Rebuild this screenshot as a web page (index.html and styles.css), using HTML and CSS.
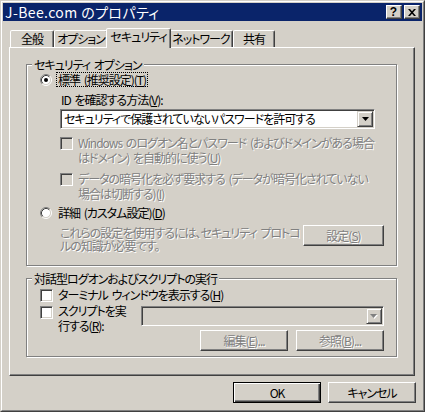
FILE: index.html
```html
<!DOCTYPE html>
<html lang="ja">
<head>
<meta charset="utf-8">
<title>J-Bee.com のプロパティ</title>
<link rel="stylesheet" href="styles.css">
</head>
<body>
<div class="window">
  <div class="frame">
    <div class="titlebar">
      <span class="title">J-Bee.com のプロパティ</span>
      <div class="cbtns">
        <span class="cbtn help">?</span>
        <span class="cbtn"><svg width="8" height="7" viewBox="0 0 8 7"><path d="M0 0h2l2 2.3L6 0h2L5 3.5 8 7H6L4 4.7 2 7H0l3-3.5z" fill="#000"/></svg></span>
      </div>
    </div>

    <div class="tabs">
      <div class="tab w44">全般</div>
      <div class="tab w54">オプション</div>
      <div class="tab active">セキュリティ</div>
      <div class="tab w64">ネットワーク</div>
      <div class="tab w42">共有</div>
    </div>

    <div class="sheet">
      <div class="group g1">
        <div class="legend">セキュリティ オプション</div>

        <div class="row radio-row r1">
          <svg class="radio" width="12" height="12" viewBox="0 0 12 12"><circle cx="6" cy="6" r="4.5" fill="#fff"/><path d="M2.11 9.89A5.5 5.5 0 0 1 9.89 2.11" fill="none" stroke="#808080"/><path d="M9.89 2.11A5.5 5.5 0 0 1 2.11 9.89" fill="none" stroke="#fff"/><path d="M2.82 9.18A4.5 4.5 0 0 1 9.18 2.82" fill="none" stroke="#404040"/><path d="M9.18 2.82A4.5 4.5 0 0 1 2.82 9.18" fill="none" stroke="#d4d0c8"/><circle cx="6" cy="6" r="2" fill="#000"/></svg>
          <span class="rlabel focus">標準 (推奨設定)(<u>T</u>)</span>
        </div>

        <div class="field-label">ID を確認する方法(<u>V</u>):</div>

        <div class="combo wide">
          <span class="combo-text">セキュリティで保護されていないパスワードを許可する</span>
          <span class="drop"><svg width="7" height="4" viewBox="0 0 7 4"><path d="M0 0h7L3.5 4z" fill="#000"/></svg></span>
        </div>

        <div class="row check-row c1">
          <span class="check disabled"></span>
          <span class="clabel disabled">Windows のログオン名とパスワード (およびドメインがある場合<br>はドメイン) を自動的に使う(<u>U</u>)</span>
        </div>

        <div class="row check-row c2">
          <span class="check disabled"></span>
          <span class="clabel disabled">データの暗号化を必ず要求する (データが暗号化されていない<br>場合は切断する)(<u>I</u>)</span>
        </div>

        <div class="row radio-row r2">
          <svg class="radio" width="12" height="12" viewBox="0 0 12 12"><circle cx="6" cy="6" r="4.5" fill="#fff"/><path d="M2.11 9.89A5.5 5.5 0 0 1 9.89 2.11" fill="none" stroke="#808080"/><path d="M9.89 2.11A5.5 5.5 0 0 1 2.11 9.89" fill="none" stroke="#fff"/><path d="M2.82 9.18A4.5 4.5 0 0 1 9.18 2.82" fill="none" stroke="#404040"/><path d="M9.18 2.82A4.5 4.5 0 0 1 2.82 9.18" fill="none" stroke="#d4d0c8"/></svg>
          <span class="rlabel">詳細 (カスタム設定)(<u>D</u>)</span>
        </div>

        <div class="row desc-row">
          <p class="desc disabled">これらの設定を使用するには、セキュリティ プロトコ<br>ルの知識が必要です。</p>
          <span class="btn disabled set">設定(<u>S</u>)</span>
        </div>
      </div>

      <div class="group g2">
        <div class="legend">対話型ログオンおよびスクリプトの実行</div>

        <div class="row check-row term">
          <span class="check"></span>
          <span class="clabel">ターミナル ウィンドウを表示する(<u>H</u>)</span>
        </div>

        <div class="row check-row script">
          <span class="check"></span>
          <span class="clabel">スクリプトを実<br>行する(<u>R</u>):</span>
          <div class="script-controls">
            <div class="combo off">
              <span class="combo-text"></span>
              <span class="drop"><svg width="8" height="5" viewBox="0 0 8 5"><path d="M1 1h7L4.5 5z" fill="#fff"/><path d="M0 0h7L3.5 4z" fill="#808080"/></svg></span>
            </div>
            <div class="btn-row">
              <span class="btn disabled wide-btn">編集(<u>E</u>)...</span>
              <span class="btn disabled wide-btn">参照(<u>B</u>)...</span>
            </div>
          </div>
        </div>
      </div>
    </div>

    <div class="footer">
      <span class="btn default wide-btn">OK</span>
      <span class="btn wide-btn">キャンセル</span>
    </div>
  </div>
</div>
</body>
</html>
```

FILE: styles.css
```css
* { box-sizing: border-box; }

html, body {
  margin: 0;
  padding: 0;
}

body {
  background: #d4d0c8;
  font-family: "Noto Sans CJK JP", "Noto Sans", sans-serif;
  font-size: 12px;
  line-height: 15px;
  letter-spacing: -1px;
  word-spacing: 2px;
  color: #000;
  font-feature-settings: "palt" 1;
}

.window {
  width: 425px;
  height: 412px;
  border: 1px solid;
  border-color: #d4d0c8 #404040 #404040 #d4d0c8;
  background: #d4d0c8;
}

.frame {
  height: 100%;
  border: 1px solid;
  border-color: #fff #808080 #808080 #fff;
  padding: 1px;
  display: flex;
  flex-direction: column;
}

/* title bar */
.titlebar {
  height: 18px;
  flex: none;
  background: #0a246a;
  color: #fff;
  display: flex;
  align-items: center;
  padding: 0 2px;
}

.title {
  flex: 1;
  font-size: 14px;
  line-height: 18px;
  letter-spacing: 0.4px;
  word-spacing: 0;
  white-space: nowrap;
}

.cbtns {
  display: flex;
  gap: 2px;
}

.cbtn {
  width: 16px;
  height: 14px;
  background: #d4d0c8;
  border: 1px solid;
  border-color: #fff #404040 #404040 #fff;
  box-shadow: inset -1px -1px #808080;
  display: flex;
  align-items: center;
  justify-content: center;
  color: #000;
}

.cbtn.help {
  font-family: "Liberation Sans", sans-serif;
  font-weight: bold;
  font-size: 12px;
  line-height: 12px;
  letter-spacing: 0;
  padding-right: 1px;
}

/* tabs */
.tabs {
  height: 26px;
  flex: none;
  display: flex;
  align-items: flex-end;
  padding-left: 7px;
}

.tab {
  flex: none;
  height: 17px;
  border: 1px solid;
  border-bottom: none;
  border-color: #fff #404040 transparent #fff;
  border-radius: 2px 2px 0 0;
  box-shadow: inset -1px 0 #808080;
  background: #d4d0c8;
  text-align: center;
  line-height: 15px;
  white-space: nowrap;
}

.tab.w44 { width: 44px; }
.tab.w54 { width: 54px; }
.tab.w64 { width: 64px; }
.tab.w42 { width: 42px; }

.tab.active {
  width: 65px;
  height: 20px;
  margin: 0 -2px -1px;
  position: relative;
  z-index: 1;
}

/* property sheet */
.sheet {
  flex: none;
  height: 329px;
  margin: 0 7px 0 6px;
  border: 1px solid;
  border-color: #fff #404040 #404040 #fff;
  box-shadow: inset -1px -1px #808080;
}

.group {
  position: relative;
  margin: 0 17px 0 16px;
  padding: 0 0 0 13px;
  border: 1px solid #808080;
  box-shadow: inset 1px 1px #fff, 1px 1px #fff;
}

.g1 {
  margin-top: 16px;
  height: 202px;
}

.g2 {
  margin-top: 12px;
  height: 79px;
}

.legend {
  position: absolute;
  top: -7px;
  left: 5px;
  padding: 0 2px;
  line-height: 13px;
  background: #d4d0c8;
  white-space: nowrap;
}

.row {
  display: flex;
}

.radio-row {
  align-items: center;
}

.radio {
  flex: none;
  display: block;
}

.rlabel {
  margin-left: 4px;
  padding: 0 1px;
  border: 1px solid transparent;
  line-height: 13px;
  white-space: nowrap;
}

.rlabel.focus {
  border: 1px dotted #000;
}

.r1 { margin-top: 7px; }
.r2 { margin-top: 4px; }

.field-label {
  margin: 5px 0 0 21px;
  white-space: nowrap;
}

/* combo boxes */
.combo {
  height: 20px;
  border: 1px solid;
  border-color: #808080 #fff #fff #808080;
  box-shadow: inset 1px 1px #404040, inset -1px -1px #d4d0c8;
  background: #fff;
  display: flex;
  align-items: center;
  padding: 1px;
}

.combo.wide {
  width: 315px;
  margin: 2px 0 0 20px;
}

.combo.off {
  background: #d4d0c8;
}

.combo-text {
  flex: 1;
  padding-left: 2px;
  line-height: 16px;
  white-space: nowrap;
  overflow: hidden;
}

.drop {
  flex: none;
  width: 16px;
  height: 16px;
  background: #d4d0c8;
  border: 1px solid;
  border-color: #d4d0c8 #404040 #404040 #d4d0c8;
  box-shadow: inset 1px 1px #fff, inset -1px -1px #808080;
  display: flex;
  align-items: center;
  justify-content: center;
}

.drop svg { display: block; }

/* check boxes */
.check-row {
  align-items: flex-start;
}

.check {
  flex: none;
  width: 13px;
  height: 13px;
  margin-top: 2px;
  border: 1px solid;
  border-color: #808080 #fff #fff #808080;
  box-shadow: inset 1px 1px #404040, inset -1px -1px #d4d0c8;
  background: #fff;
}

.check.disabled {
  background: #d4d0c8;
}

.clabel {
  margin-left: 5px;
  white-space: nowrap;
}

.c1, .c2 {
  margin-left: 20px;
  margin-top: 6px;
}

.disabled {
  color: #808080;
  text-shadow: 1px 1px 0 #fff;
}

/* description + button */
.desc-row {
  margin-top: 5px;
  align-items: flex-start;
}

.desc {
  margin: 1px 0 0 20px;
  line-height: 13px;
  white-space: nowrap;
}

.btn {
  flex: none;
  height: 21px;
  border: 1px solid;
  border-color: #fff #404040 #404040 #fff;
  box-shadow: inset -1px -1px #808080;
  background: #d4d0c8;
  display: flex;
  align-items: center;
  justify-content: center;
  white-space: nowrap;
}

.btn.set {
  width: 81px;
  margin-left: auto;
  margin-right: 12px;
}

.wide-btn {
  width: 88px;
}

.btn.default {
  border-color: #000;
  box-shadow: inset 1px 1px #fff, inset -1px -1px #404040, inset -2px -2px #808080;
}

/* group 2 */
.term {
  margin-top: 8px;
}

.script {
  margin-top: 1px;
}

.script .check {
  margin-top: 3px;
}

.script-controls {
  margin: 3px 12px 0 auto;
  width: 243px;
}

.btn-row {
  display: flex;
  justify-content: flex-end;
  gap: 8px;
  margin-top: 4px;
}

/* footer */
.footer {
  flex: none;
  display: flex;
  justify-content: flex-end;
  gap: 7px;
  margin-top: 6px;
  padding-right: 6px;
}
```
